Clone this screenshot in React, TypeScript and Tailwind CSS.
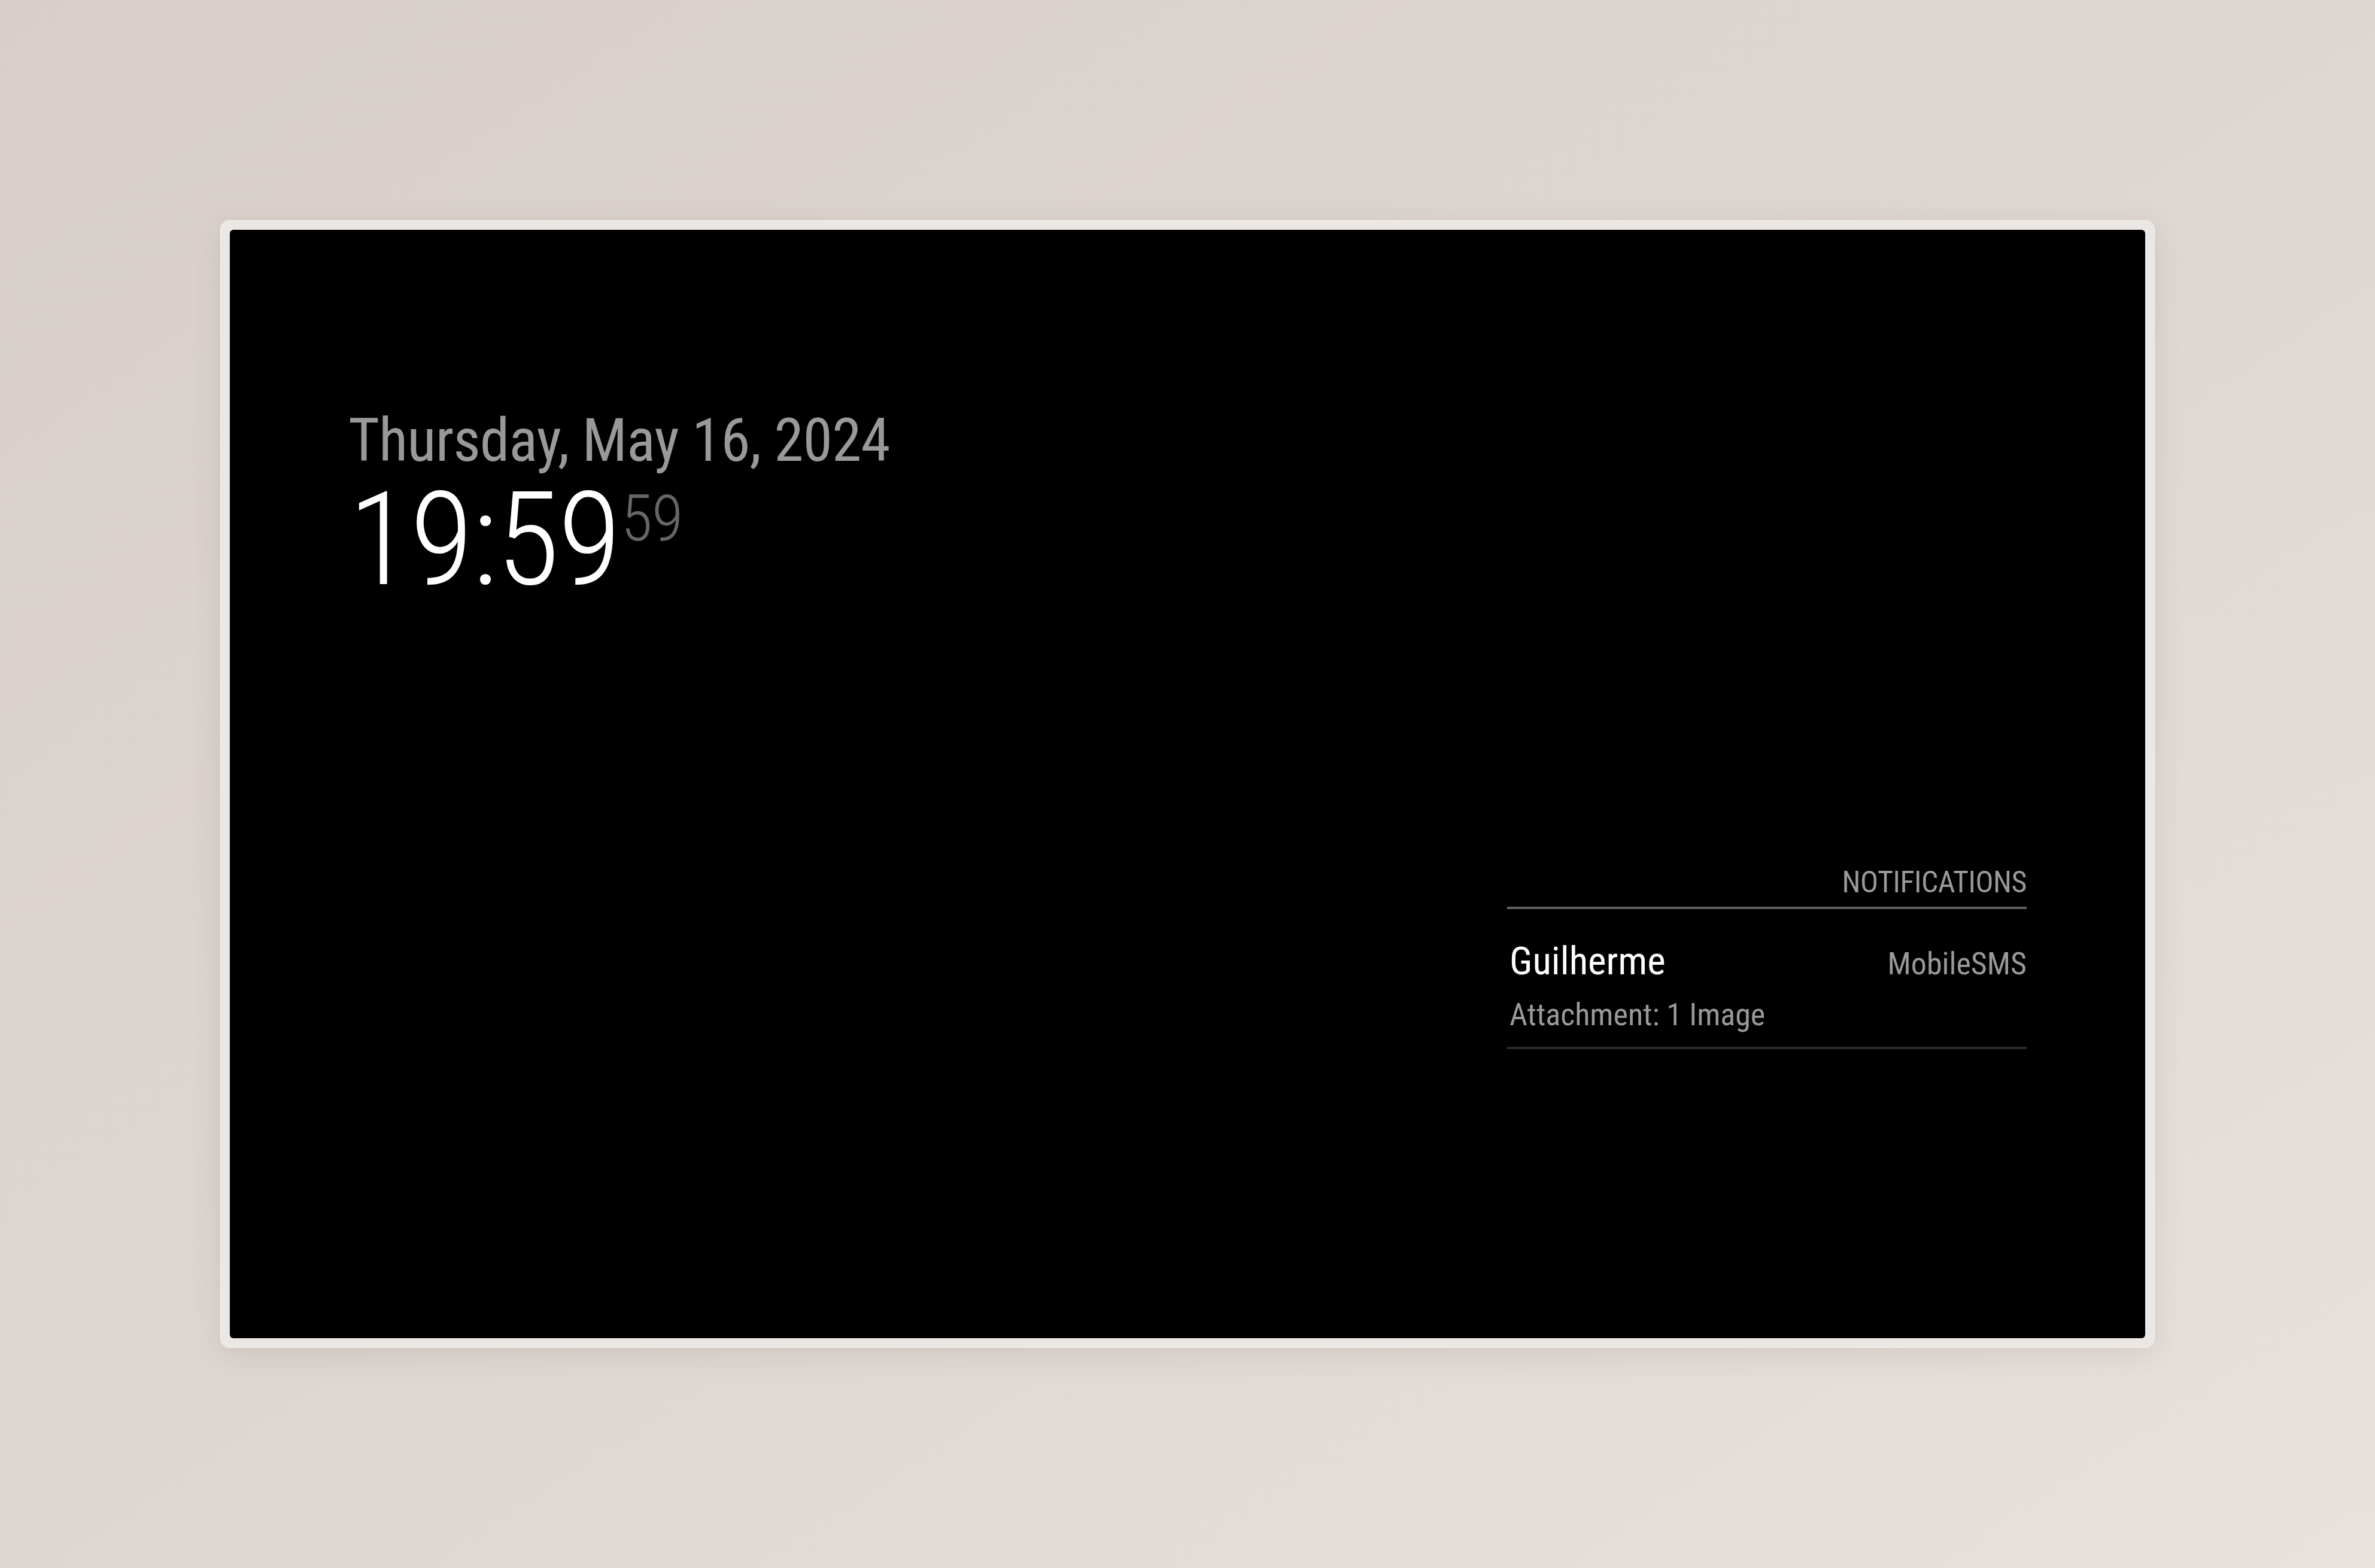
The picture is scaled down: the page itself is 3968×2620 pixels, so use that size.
import React from 'react'

const font = "font-['Roboto_Condensed','Roboto',sans-serif] [font-stretch:condensed]"

function Clock() {
  return (
    <div className={`${font} font-normal`}>
      <div className="text-[100px] leading-[117px] tracking-[-1px] text-[#999]">Thursday, May 16, 2024</div>
      <div className="text-[217px] leading-[217px] tracking-[-2.5px] text-white font-light">
        19:59
        <span className="ml-[2px] align-super text-[108px] leading-none tracking-[-1px] text-[#666]">59</span>
      </div>
    </div>
  )
}

function Notifications() {
  return (
    <div className={`${font} w-[868px]`}>
      <div className="border-b-[4px] border-[#616161] pb-[16px] text-right text-[50px] uppercase leading-[50px] tracking-[-0.5px] text-[#999]">
        Notifications
      </div>
      <div className="mt-[41px] border-b-[4px] border-[#2a2a2a] pb-[17px] pl-[4px]">
        <div className="flex items-baseline justify-between leading-[93px]">
          <span className="text-[65px] text-white">Guilherme</span>
          <span className="text-[52px] text-[#999]">MobileSMS</span>
        </div>
        <div className="mt-[3px] text-[52px] leading-[72px] text-[#999]">Attachment: 1 Image</div>
      </div>
    </div>
  )
}

export default function App() {
  return (
    <div className="flex h-[2620px] w-full items-center justify-center bg-linear-to-br from-[#d8cfca] via-[#ded6d1] to-[#e8e1dc]">
      <div className="rounded-[15px] border-[1.5px] border-[#f7f3f0] bg-[#ebe7e4] p-[15px] shadow-[0_12px_50px_rgba(90,70,60,0.12)]">
        <div className="flex h-[1852px] w-[3200px] flex-col rounded-[6px] bg-black px-[198px] pt-[293px]">
          <Clock />
          <div className="mt-[438px] flex justify-end">
            <Notifications />
          </div>
        </div>
      </div>
    </div>
  )
}
